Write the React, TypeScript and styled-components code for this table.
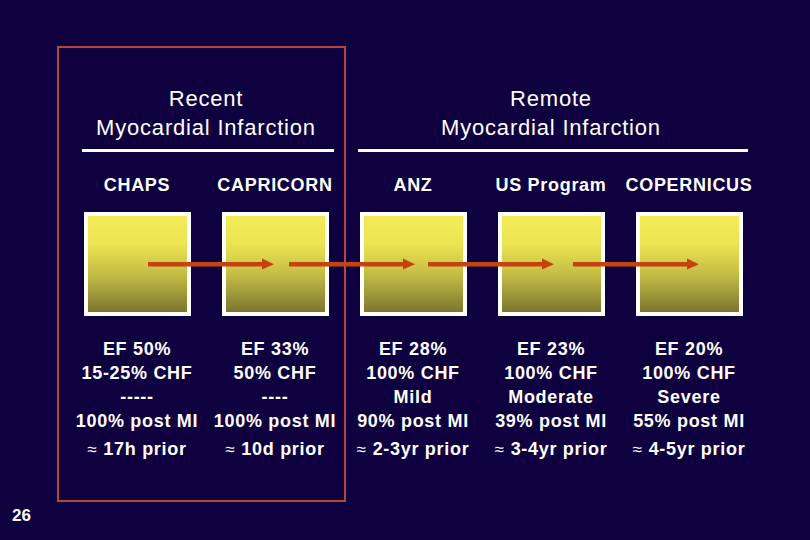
import React from "react";
import styled, { createGlobalStyle } from "styled-components";

const Global = createGlobalStyle`
  html, body { margin: 0; padding: 0; background: #0f0140; }
  body { font-family: "Liberation Sans", Arial, sans-serif; }
`;

const Slide = styled.div`
  position: relative;
  width: 810px;
  height: 540px;
  background: #0f0140;
  color: #ffffff;
  overflow: hidden;
  display: flex;
  flex-direction: column;
`;

const Content = styled.div`
  margin-left: 68px;
  width: 690px;
  display: grid;
  grid-template-columns: repeat(5, 138px);
`;

const Group = styled.div<{ $span: string }>`
  grid-column: ${(p) => p.$span};
  display: flex;
  flex-direction: column;
  align-items: stretch;
  margin-top: 84px;
`;

const Heading = styled.div`
  font-size: 22px;
  line-height: 29px;
  letter-spacing: 0.8px;
  text-align: center;
  height: 58px;
`;

const Rule = styled.div`
  height: 3px;
  background: #ffffff;
  margin: 7px 10px 0 14px;
`;

const Label = styled.div`
  margin-top: 22px;
  font-size: 18px;
  line-height: 22px;
  font-weight: bold;
  letter-spacing: 0.7px;
  text-align: center;
`;

const BoxRow = styled.div`
  grid-column: 1 / 6;
  position: relative;
  display: grid;
  grid-template-columns: repeat(5, 138px);
  margin-top: 16px;
`;

const Box = styled.div`
  justify-self: center;
  box-sizing: border-box;
  width: 107px;
  height: 104px;
  border: 4px solid #ffffff;
  background: linear-gradient(
    to bottom,
    #f3eb56 0%,
    #ebe352 30%,
    #c2bb44 62%,
    #7b762e 100%
  );
`;

const ArrowWrap = styled.svg`
  position: absolute;
  top: 46px;
  width: 126px;
  height: 12px;
  overflow: visible;
`;

const DataRow = styled.div`
  grid-column: 1 / 6;
  display: grid;
  grid-template-columns: repeat(5, 138px);
  margin-top: 21px;
`;

const Data = styled.div`
  display: flex;
  flex-direction: column;
  align-items: center;
  font-size: 18px;
  font-weight: bold;
  letter-spacing: 0.7px;
  line-height: 24px;
  white-space: nowrap;
`;

const DataLine = styled.div<{ $gap?: boolean }>`
  margin-top: ${(p) => (p.$gap ? "4px" : "0")};
`;

const Approx = styled.span`
  font-weight: normal;
  font-size: 17px;
  margin-right: 6px;
`;

const Footer = styled.div`
  margin-top: 43px;
  padding-left: 12px;
  font-size: 17px;
  line-height: 22px;
  font-weight: bold;
`;

const Frame = styled.div`
  position: absolute;
  left: 57px;
  top: 46px;
  width: 289px;
  height: 456px;
  box-sizing: border-box;
  border: 2px solid #b0463e;
  pointer-events: none;
`;

const Arrow: React.FC<{ left: number }> = ({ left }) => (
  <ArrowWrap style={{ left }} viewBox="0 0 126 12">
    <rect x="0" y="4" width="116" height="4.5" fill="#c6420f" />
    <polygon points="114,0.5 126,6.2 114,11.5" fill="#c6420f" />
  </ArrowWrap>
);

const labels = ["CHAPS", "CAPRICORN", "ANZ", "US Program", "COPERNICUS"];

const data = [
  ["EF 50%", "15-25% CHF", "-----", "100% post MI", "17h prior"],
  ["EF 33%", "50% CHF", "----", "100% post MI", "10d prior"],
  ["EF 28%", "100% CHF", "Mild", "90% post MI", "2-3yr prior"],
  ["EF 23%", "100% CHF", "Moderate", "39% post MI", "3-4yr prior"],
  ["EF 20%", "100% CHF", "Severe", "55% post MI", "4-5yr prior"],
];

export default function App() {
  return (
    <>
      <Global />
      <Slide>
        <Content>
          <Group $span="1 / 3">
            <Heading>
              Recent
              <br />
              Myocardial Infarction
            </Heading>
            <Rule />
          </Group>
          <Group $span="3 / 6">
            <Heading>
              Remote
              <br />
              Myocardial Infarction
            </Heading>
            <Rule />
          </Group>
          {labels.map((l) => (
            <Label key={l}>{l}</Label>
          ))}
          <BoxRow>
            {labels.map((l) => (
              <Box key={l} />
            ))}
            <Arrow left={80} />
            <Arrow left={221} />
            <Arrow left={360} />
            <Arrow left={505} />
          </BoxRow>
          <DataRow>
            {data.map((col, i) => (
              <Data key={i}>
                <DataLine>{col[0]}</DataLine>
                <DataLine>{col[1]}</DataLine>
                <DataLine>{col[2]}</DataLine>
                <DataLine>{col[3]}</DataLine>
                <DataLine $gap>
                  <Approx>≈</Approx>
                  {col[4]}
                </DataLine>
              </Data>
            ))}
          </DataRow>
        </Content>
        <Footer>26</Footer>
        <Frame />
      </Slide>
    </>
  );
}
